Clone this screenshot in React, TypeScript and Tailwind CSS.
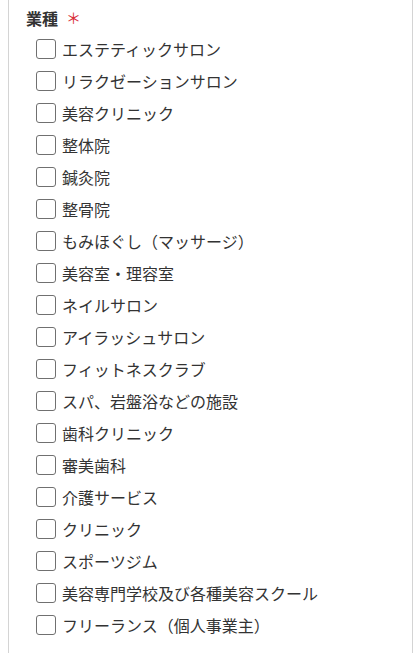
const items = [
  "エステティックサロン",
  "リラクゼーションサロン",
  "美容クリニック",
  "整体院",
  "鍼灸院",
  "整骨院",
  "もみほぐし（マッサージ）",
  "美容室・理容室",
  "ネイルサロン",
  "アイラッシュサロン",
  "フィットネスクラブ",
  "スパ、岩盤浴などの施設",
  "歯科クリニック",
  "審美歯科",
  "介護サービス",
  "クリニック",
  "スポーツジム",
  "美容専門学校及び各種美容スクール",
  "フリーランス（個人事業主）",
];

export default function App() {
  return (
    <div
      className="h-[653px] w-[420px] overflow-hidden bg-white text-[#333]"
      style={{ fontFamily: '"Noto Sans CJK JP", "Noto Sans", sans-serif' }}
    >
      <div className="ml-[8px] h-full w-[405px] border-x border-[#d4d4d4] pt-[2px]">
        <div className="flex h-[31px] items-center pl-[17px] text-[16px] font-bold leading-none">
          業種
          <span className="ml-[8px] text-[15px] font-normal text-[#d9303a]">＊</span>
        </div>
        <ul>
          {items.map((label) => (
            <li key={label} className="flex h-[32px] items-center pl-[27px]">
              <span className="h-[20px] w-[20px] shrink-0 rounded-[3px] border border-[#707070] bg-white" />
              <span className="ml-[6px] -mt-[1px] text-[16px] leading-none">{label}</span>
            </li>
          ))}
        </ul>
      </div>
    </div>
  );
}
